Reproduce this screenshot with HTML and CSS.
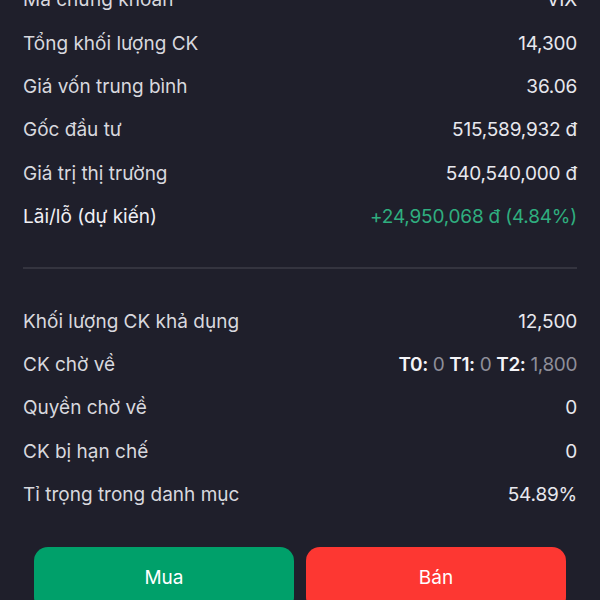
FILE: index.html
```html
<!DOCTYPE html>
<html lang="vi">
<head>
<meta charset="UTF-8">
<title>Chi tiết mã chứng khoán</title>
<link rel="stylesheet" href="styles.css">
</head>
<body>
<div class="sheet">
  <div class="group first">
    <div class="row"><span class="label">Mã chứng khoán</span><span class="value">VIX</span></div>
    <div class="row"><span class="label">Tổng khối lượng CK</span><span class="value">14,300</span></div>
    <div class="row"><span class="label">Giá vốn trung bình</span><span class="value">36.06</span></div>
    <div class="row"><span class="label">Gốc đầu tư</span><span class="value">515,589,932 đ</span></div>
    <div class="row"><span class="label">Giá trị thị trường</span><span class="value">540,540,000 đ</span></div>
    <div class="row"><span class="label strong">Lãi/lỗ (dự kiến)</span><span class="value up">+24,950,068 đ (4.84%)</span></div>
  </div>
  <div class="divider"></div>
  <div class="group">
    <div class="row"><span class="label">Khối lượng CK khả dụng</span><span class="value">12,500</span></div>
    <div class="row"><span class="label">CK chờ về</span><span class="value pending"><b>T0:</b> <i>0</i> <b>T1:</b> <i>0</i> <b>T2:</b> <i>1,800</i></span></div>
    <div class="row"><span class="label">Quyền chờ về</span><span class="value">0</span></div>
    <div class="row"><span class="label">CK bị hạn chế</span><span class="value">0</span></div>
    <div class="row"><span class="label">Tỉ trọng trong danh mục</span><span class="value">54.89%</span></div>
  </div>
  <div class="actions">
    <button class="btn buy">Mua</button>
    <button class="btn sell">Bán</button>
  </div>
</div>
</body>
</html>
```

FILE: styles.css
```css
html,body{margin:0;height:100%;overflow:hidden}
body{background:#1f1f2b;font-family:Inter,"Noto Sans",sans-serif;color:#e4e4ea}
.sheet{padding:0 23px 0 23px}
.group.first{margin-top:-22px}
.row{display:flex;justify-content:space-between;align-items:center;height:43.4px;font-size:19px}
.label{color:#d8d8de}
.label.strong{color:#f0f0f4}
.value{color:#e8e8ee;letter-spacing:-0.2px}
.value.up{color:#2fae7f}
.value.pending{letter-spacing:-0.4px}
.value b{font-weight:600;color:#f4f4f8}
.value i{font-style:normal;color:#8e8e99}
.divider{height:2px;background:#34343f;margin:29px 0 30px 0}
.actions{display:flex;gap:12px;margin:31px 11px 0 11px}
.btn{flex:1;height:64px;border:0;border-radius:14px;color:#fff;font-family:Inter,"Noto Sans",sans-serif;font-size:19px;padding-bottom:4px}
.btn.buy{background:#00a06a}
.btn.sell{background:#fd3732}
```
